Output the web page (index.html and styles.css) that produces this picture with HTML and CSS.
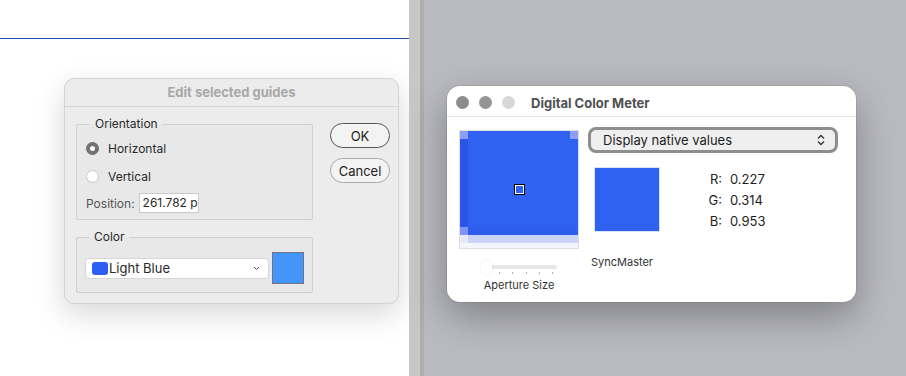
FILE: index.html
```html
<!DOCTYPE html>
<html lang="en">
<head>
    <meta charset="UTF-8">
    <meta name="viewport" content="width=device-width, initial-scale=1.0">
    <title>Edit selected guides</title>
    <link rel="stylesheet" href="styles.css">
</head>
<body>
    <div class="screen">
        <!-- Photoshop canvas with the guide dialog -->
        <div class="canvas">
            <div class="guide"></div>
            <div class="dialog">
                <div class="dialog-title">Edit selected guides</div>
                <div class="dialog-body">
                    <div class="groups">
                        <fieldset class="group orientation">
                            <legend>Orientation</legend>
                            <div class="radio"><span class="dot checked"></span>Horizontal</div>
                            <div class="radio"><span class="dot"></span>Vertical</div>
                            <div class="position">
                                <span class="muted">Position:</span>
                                <span class="field">261.782 p</span>
                            </div>
                        </fieldset>
                        <fieldset class="group color">
                            <legend>Color</legend>
                            <div class="color-row">
                                <div class="select">
                                    <span class="chip"></span>
                                    <span class="select-text">Light Blue</span>
                                    <svg class="caret" width="7" height="5" viewBox="0 0 7 5"><path d="M1 1 L3.5 3.5 L6 1" fill="none" stroke="#555" stroke-width="1"/></svg>
                                </div>
                                <div class="swatch"></div>
                            </div>
                        </fieldset>
                    </div>
                    <div class="buttons">
                        <button class="btn default">OK</button>
                        <button class="btn">Cancel</button>
                    </div>
                </div>
            </div>
        </div>

        <div class="divider"></div>

        <!-- Desktop with Digital Color Meter -->
        <div class="desktop">
            <div class="meter">
                <div class="meter-bar">
                    <span class="light dark"></span>
                    <span class="light mid"></span>
                    <span class="light off"></span>
                    <span class="meter-title">Digital Color Meter</span>
                </div>
                <div class="meter-body">
                    <div class="lens-col">
                        <div class="magnifier">
                            <span class="marker"></span>
                        </div>
                        <div class="slider">
                            <div class="track"></div>
                            <span class="knob"></span>
                            <div class="ticks">
                                <i></i><i></i><i></i><i></i><i></i>
                            </div>
                        </div>
                        <div class="caption">Aperture Size</div>
                    </div>
                    <div class="meter-side">
                        <div class="popup">
                            <span>Display native values</span>
                            <svg width="8" height="12" viewBox="0 0 8 12"><path d="M1 4.5 L4 1.5 L7 4.5 M1 7.5 L4 10.5 L7 7.5" fill="none" stroke="#333" stroke-width="1.3"/></svg>
                        </div>
                        <div class="readout">
                            <div class="sample"></div>
                            <div class="rgb">
                                <span>R:</span><span>0.227</span>
                                <span>G:</span><span>0.314</span>
                                <span>B:</span><span>0.953</span>
                            </div>
                        </div>
                        <div class="display-name">SyncMaster</div>
                    </div>
                </div>
            </div>
        </div>
    </div>
</body>
</html>
```

FILE: styles.css
```css
* {
    box-sizing: border-box;
}

html, body {
    margin: 0;
    padding: 0;
}

body {
    font-family: Inter, "Noto Sans", sans-serif;
    font-size: 12px;
    color: #2a2a2a;
}

.screen {
    display: flex;
    width: 906px;
    height: 376px;
    overflow: hidden;
}

/* Left canvas */
.canvas {
    width: 409px;
    flex-shrink: 0;
    background-color: #fff;
}

.guide {
    height: 1px;
    margin-top: 38px;
    background-color: #1f4fae;
}

.divider {
    width: 15px;
    flex-shrink: 0;
    background: linear-gradient(to right, #c7c7c7 0 11px, #adadb2 11px);
}

/* Guide dialog */
.dialog {
    width: 335px;
    height: 226px;
    margin: 39px 0 0 64px;
    background-color: #ececec;
    border: 1px solid #d3d3d3;
    border-radius: 10px;
    box-shadow: 0 10px 30px rgba(0, 0, 0, 0.16);
}

.dialog-title {
    height: 28px;
    border-bottom: 1px solid #d5d5d5;
    text-align: center;
    font-size: 13px;
    font-weight: 700;
    line-height: 27px;
    color: #a8a8a8;
}

.dialog-body {
    display: flex;
    gap: 17px;
    padding: 9px 0 0 11px;
}

.group {
    width: 237px;
    min-width: 0;
    margin: 0;
    border: 1px solid #cfcfcf;
    border-radius: 2px;
    background-color: rgba(0, 0, 0, 0.015);
}

.group legend {
    margin-left: 4px;
    padding: 0 5px;
    font-size: 12px;
    line-height: 16px;
    color: #2a2a2a;
}

.orientation {
    padding: 6px 8px 6px 9px;
}

.color {
    margin-top: 9px;
    padding: 7px 8px 8px 8px;
}

.radio {
    display: flex;
    align-items: center;
    gap: 9px;
    height: 20px;
    margin-bottom: 8px;
}

.dot {
    width: 13px;
    height: 13px;
    border-radius: 50%;
    background-color: #fff;
    border: 1px solid #c6c6c6;
}

.dot.checked {
    border: 4px solid #727272;
    background-color: #fff;
}

.position {
    display: flex;
    align-items: center;
    gap: 4px;
    height: 20px;
    margin-top: -1px;
}

.muted {
    color: #555;
}

.field {
    width: 60px;
    height: 20px;
    padding: 0 3px;
    line-height: 18px;
    background-color: #fff;
    border: 1px solid #cacaca;
    white-space: nowrap;
}

.color-row {
    display: flex;
    align-items: center;
    gap: 3px;
}

.select {
    display: flex;
    align-items: center;
    width: 184px;
    height: 21px;
    padding: 0 8px 0 6px;
    background-color: #fff;
    border: 1px solid #d6d6d6;
    border-radius: 4px;
    font-size: 13px;
}

.chip {
    width: 16px;
    height: 13px;
    margin-right: 1px;
    border-radius: 3px;
    background-color: #2e5ff2;
}

.select-text {
    flex: 1;
}

.swatch {
    width: 32px;
    height: 32px;
    background-color: #4494f9;
    border: 1px solid #6b7583;
}

.buttons {
    display: flex;
    flex-direction: column;
    gap: 10px;
    margin-top: 7px;
}

.btn {
    width: 60px;
    height: 25px;
    padding: 0;
    font-family: inherit;
    font-size: 13px;
    color: #222;
    background-color: #f3f3f3;
    border: 1px solid #a9a9a9;
    border-radius: 13px;
}

.btn.default {
    border-color: #565656;
}

/* Right desktop */
.desktop {
    flex: 1;
    padding: 86px 0 0 23px;
    background-color: #babbc1;
}

.meter {
    width: 409px;
    height: 216px;
    background-color: #fff;
    border-radius: 13px;
    box-shadow: 0 14px 38px rgba(0, 0, 0, 0.32), 0 0 0 1px rgba(0, 0, 0, 0.06);
}

.meter-bar {
    display: flex;
    align-items: center;
    gap: 10px;
    height: 31px;
    padding: 3px 0 0 9px;
    border-bottom: 1px solid #e3e3e3;
}

.light {
    width: 13px;
    height: 13px;
    border-radius: 50%;
}

.light.dark {
    background-color: #8c8c8c;
}

.light.mid {
    background-color: #959595;
}

.light.off {
    background-color: #d7d7d7;
}

.meter-title {
    margin-left: 6px;
    font-size: 13px;
    font-weight: 700;
    color: #505050;
}

.meter-body {
    display: flex;
    padding: 10px 0 0 12px;
}

.lens-col {
    width: 120px;
    margin-top: 3px;
}

.magnifier {
    position: relative;
    width: 120px;
    height: 119px;
    border: 1px solid #dedede;
    background:
        linear-gradient(#8d9ff5, #8d9ff5) 0 0 / 8px 8px no-repeat,
        linear-gradient(#8d9ff5, #8d9ff5) 100% 0 / 8px 8px no-repeat,
        linear-gradient(#7f93f3, #7f93f3) 0 96px / 8px 8px no-repeat,
        linear-gradient(#e7e9f9, #e7e9f9) 0 104px / 8px 8px no-repeat,
        linear-gradient(#2b55e6, #2b55e6) 0 0 / 8px 104px no-repeat,
        linear-gradient(#2d5eee, #2d5eee) 0 96px / 100% 8px no-repeat,
        linear-gradient(to bottom, #2f62f1 0 104px, #cdd3f8 104px 112px, #f4f5fb 112px);
}

.marker {
    position: absolute;
    left: 54px;
    top: 53px;
    width: 11px;
    height: 11px;
    border: 1px solid #000;
    box-shadow: inset 0 0 0 1px #fff;
    background-color: #2f62f1;
}

.slider {
    position: relative;
    height: 16px;
    margin-top: 11px;
}

.track {
    position: absolute;
    left: 22px;
    top: 5px;
    width: 76px;
    height: 4px;
    border-radius: 2px;
    background-color: #e7e7e7;
}

.knob {
    position: absolute;
    left: 22px;
    top: 0;
    width: 11px;
    height: 15px;
    border-radius: 6px;
    background-color: #fff;
    box-shadow: 0 0 2px rgba(0, 0, 0, 0.12);
}

.ticks {
    position: absolute;
    left: 40px;
    top: 12px;
    width: 54px;
    display: flex;
    justify-content: space-between;
}

.ticks i {
    width: 1px;
    height: 2px;
    background-color: #b3b3b3;
}

.caption {
    margin-top: 2px;
    text-align: center;
    font-size: 11px;
    line-height: 14px;
    color: #333;
}

.meter-side {
    margin-left: 9px;
}

.popup {
    display: flex;
    align-items: center;
    justify-content: space-between;
    width: 250px;
    height: 26px;
    padding: 0 10px 0 12px;
    background-color: #efefef;
    border: 3px solid #8e8e8e;
    border-radius: 8px;
    font-size: 13px;
    color: #1e1e1e;
}

.readout {
    display: flex;
    margin-top: 14px;
    margin-left: 6px;
}

.sample {
    width: 66px;
    height: 65px;
    background-color: #2f62f1;
    border: 1px solid #d9e3fb;
}

.rgb {
    display: grid;
    grid-template-columns: 20px auto;
    column-gap: 8px;
    align-content: start;
    margin: 2px 0 0 42px;
    font-size: 13px;
    line-height: 21px;
    color: #1e1e1e;
}

.rgb span:nth-child(odd) {
    text-align: right;
}

.display-name {
    margin: 23px 0 0 3px;
    font-size: 11px;
    line-height: 14px;
    color: #333;
}
```
